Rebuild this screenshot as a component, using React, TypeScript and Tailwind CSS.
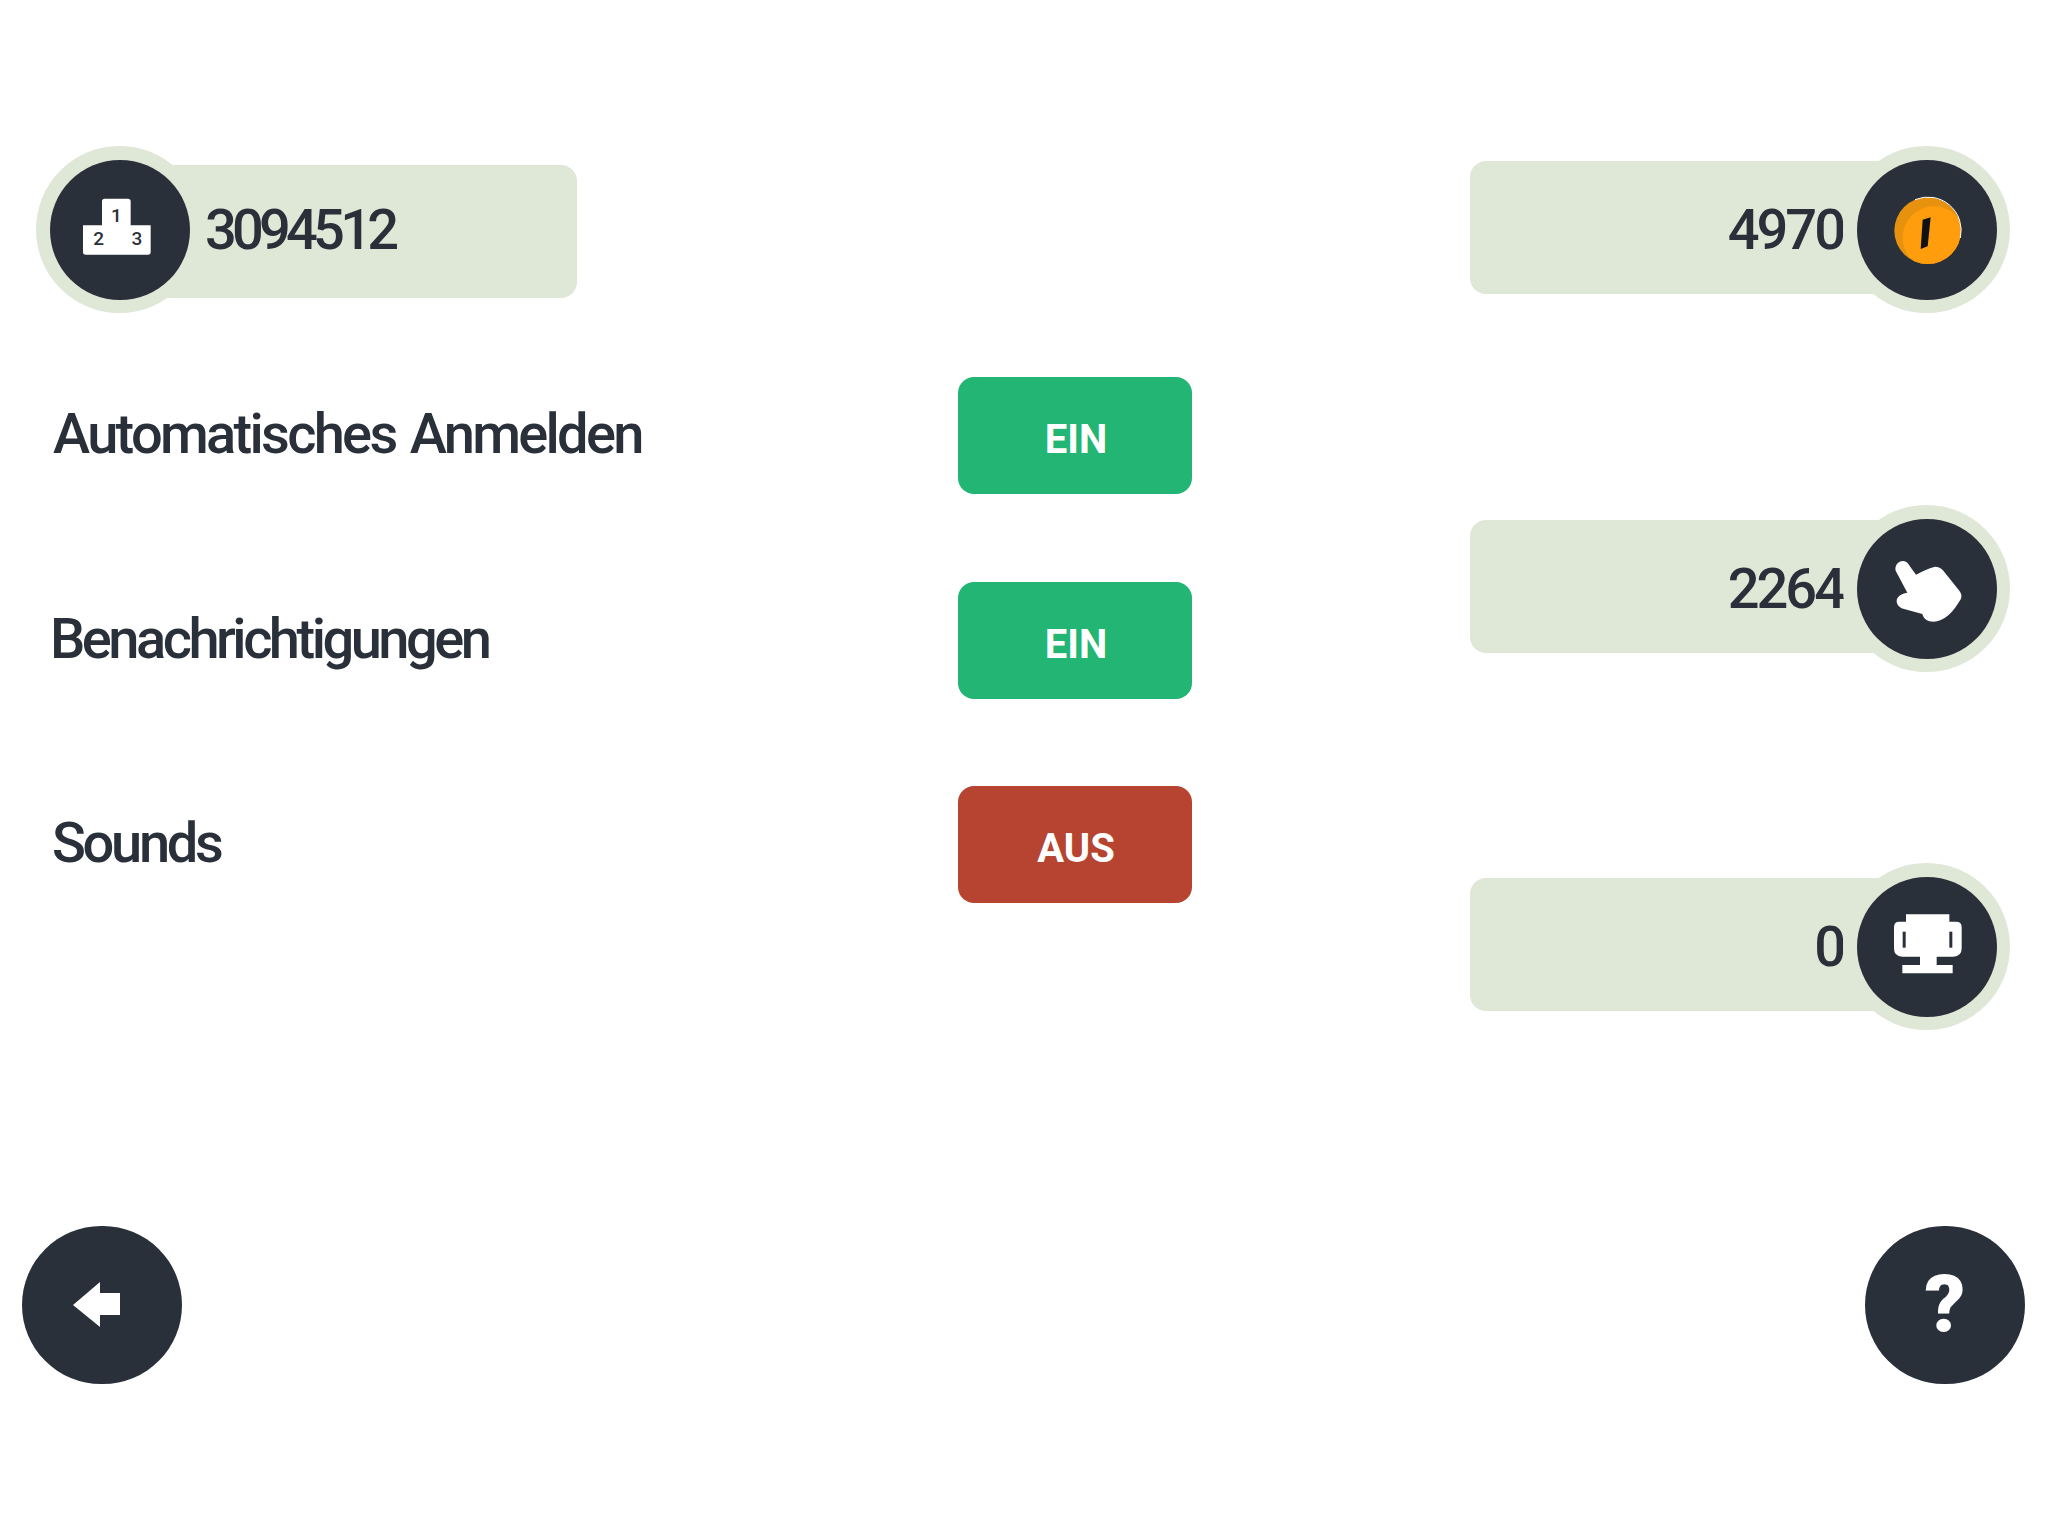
function Podium() {
  return (
    <svg width="96" height="84" viewBox="0 0 288 252">
      <path d="M90 40a8 8 0 0 1 8-8h70a8 8 0 0 1 8 8v72h60v80a8 8 0 0 1-8 8H41a8 8 0 0 1-8-8v-80h57z" fill="#fff" />
      <text x="133" y="103" textAnchor="middle" fontSize="57" fontWeight="500" fill="#2a303a" fontFamily="Roboto, sans-serif">1</text>
      <text x="80" y="172" textAnchor="middle" fontSize="57" fontWeight="500" fill="#2a303a" fontFamily="Roboto, sans-serif">2</text>
      <text x="195" y="172" textAnchor="middle" fontSize="57" fontWeight="500" fill="#2a303a" fontFamily="Roboto, sans-serif">3</text>
    </svg>
  );
}

function Coin() {
  return (
    <svg width="96" height="84" viewBox="0 0 288 252" className="ml-[2px]">
      <defs>
        <clipPath id="coin-face">
          <circle cx="143" cy="128" r="100" />
        </clipPath>
      </defs>
      <circle cx="143" cy="128" r="100" fill="#e6920f" />
      <circle cx="162" cy="149" r="94" fill="#ff9d0c" clipPath="url(#coin-face)" />
      <path d="M105 35A100 100 0 0 1 241 150" fill="none" stroke="#fff" strokeWidth="3" />
      <path d="M128 95L152 88 143 175 122 183z" fill="#111" />
    </svg>
  );
}

function Hand() {
  return (
    <svg width="96" height="84" viewBox="0 0 288 252" className="ml-[2px] mt-[7px]">
      <path
        d="M47 62C43 46 56 33 68 33 76 33 83 37 87 45L108 74C125 66 145 54 165 50 175 50 183 54 190 62L238 122C244 130 246 138 243 146 232 165 220 182 205 196 190 208 175 215 160 215 145 215 132 210 127 192L75 178C60 175 50 165 50 153 50 142 60 132 82 128Z"
        fill="#fff"
      />
    </svg>
  );
}

function Trophy() {
  return (
    <svg width="96" height="84" viewBox="0 0 288 252" className="ml-[2px]">
      <path
        d="M78 28H208V50H228Q245 50 245 66V130Q245 155 220 155H170V180H218V205H67V180H120V155H67Q42 155 42 130V66Q42 50 58 50H78Z"
        fill="#fff"
      />
      <rect x="68" y="80" width="9" height="48" fill="#2a303a" />
      <rect x="208" y="80" width="9" height="48" fill="#2a303a" />
    </svg>
  );
}

function Disc({ children }: { children: React.ReactNode }) {
  return (
    <div className="w-[167px] h-[167px] shrink-0 rounded-full bg-[#dfe7d7] flex items-center justify-center">
      <div className="w-[140px] h-[140px] rounded-full bg-[#2a303a] flex items-center justify-center">{children}</div>
    </div>
  );
}

function RightPill({ value, children, mt }: { value: string; children: React.ReactNode; mt: string }) {
  return (
    <div className={`flex items-center w-[540px] h-[167px] ${mt}`}>
      <div className="flex-1 h-[133px] -mt-[4px] pt-[4px] bg-[#dfe7d7] rounded-[16px] -mr-[70px] flex items-center justify-end pr-[70px] text-[56px] tracking-[-3px] font-medium text-[#2a303a] font-['Roboto',sans-serif]">
        {value}
      </div>
      <div className="relative"><Disc>{children}</Disc></div>
    </div>
  );
}

function Row({ label, state, color, mt, labelClass }: { label: string; state: string; color: string; mt: string; labelClass: string }) {
  return (
    <div className={`flex items-center h-[117px] pl-[16px] ${mt}`}>
      <div className={`text-[56px] font-medium text-[#2a303a] font-['Roboto',sans-serif] -mt-[4px] ${labelClass}`}>{label}</div>
      <div className={`w-[234px] h-[117px] rounded-[16px] flex items-center justify-center text-white text-[40px] font-bold font-['Roboto',sans-serif] pt-[8px] pl-[2px] ${color}`}>
        {state}
      </div>
    </div>
  );
}

export default function App() {
  return (
    <div className="w-[2048px] h-[1536px] bg-white flex flex-col overflow-hidden">
      <div className="h-[1226px] flex justify-between pl-[36px] pr-[38px] pt-[146px]">
        <div className="flex flex-col">
          <div className="flex items-center w-[541px] h-[167px]">
            <div className="relative"><Disc><Podium /></Disc></div>
            <div className="flex-1 h-[133px] mt-[4px] pb-[4px] bg-[#dfe7d7] rounded-r-[16px] -ml-[70px] pl-[72px] flex items-center text-[56px] tracking-[-4.800px] font-medium text-[#2a303a] font-['Roboto',sans-serif]">
              3094512
            </div>
          </div>
          <Row label="Automatisches Anmelden" state="EIN" color="bg-[#22b573]" mt="mt-[64px]" labelClass="w-[906px] pl-[1px] tracking-[-2.700px] [word-spacing:3px]" />
          <Row label="Benachrichtigungen" state="EIN" color="bg-[#22b573]" mt="mt-[88px]" labelClass="w-[906px] -ml-[2px] mr-[2px] tracking-[-3.500px]" />
          <Row label="Sounds" state="AUS" color="bg-[#b64431]" mt="mt-[87px]" labelClass="w-[906px] tracking-[-3.300px]" />
        </div>
        <div className="flex flex-col">
          <RightPill value="4970" mt=""><Coin /></RightPill>
          <RightPill value="2264" mt="mt-[192px]"><Hand /></RightPill>
          <RightPill value="0" mt="mt-[191px]"><Trophy /></RightPill>
        </div>
      </div>
      <div className="flex justify-between pl-[22px] pr-[23px]">
        <div className="w-[160px] h-[158px] rounded-full bg-[#2a303a] flex items-center justify-center">
          <svg width="47" height="45" viewBox="0 0 47 45" className="-ml-[12px] -mt-[2px]">
            <path d="M0 23L27 0v11h20v22H27v12z" fill="#fff" />
          </svg>
        </div>
        <div className="w-[160px] h-[158px] rounded-full bg-[#2a303a] flex items-center justify-center text-white text-[80px] leading-none font-black font-['Roboto',sans-serif]">
          ?
        </div>
      </div>
    </div>
  );
}
